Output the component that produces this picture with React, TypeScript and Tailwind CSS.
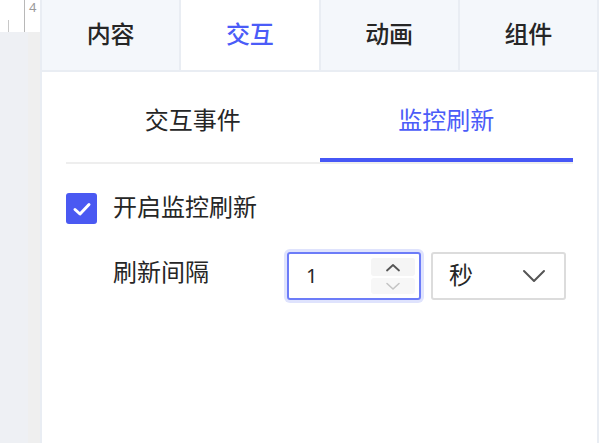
import React from "react";

const font = { fontFamily: '"Noto Sans", "Noto Sans CJK SC", sans-serif' };

export default function App() {
  return (
    <div className="flex h-[443px] w-[599px] overflow-hidden bg-white" style={font}>
      {/* left ruler strip */}
      <div className="flex w-[40px] flex-col">
        <div className="relative h-[32px] bg-white">
          <div className="absolute left-[8px] top-[20px] h-[12px] w-[1px] bg-[#c8c8c8]" />
          <div className="absolute left-[24px] top-0 h-[32px] w-[1px] bg-[#b8b8b8]" />
          <div className="absolute left-[29px] top-0 text-[13px] leading-[14px] text-[#9a9a9a]">4</div>
        </div>
        <div className="flex flex-1">
          <div className="w-[28px] bg-[#eef0f4]" />
          <div className="flex-1 bg-[#efefef]" />
        </div>
      </div>

      {/* panel */}
      <div className="flex flex-1 flex-col border-l-2 border-r-2 border-[#e9edf3]">
        {/* top tabs */}
        <div className="flex h-[72px] border-b-2 border-[#e9edf3]">
          <div className="flex flex-1 items-center justify-center border-r-2 border-[#e9edf3] bg-[#f4f7fb] pb-[3px] text-[24px] font-medium text-[#262626]">内容</div>
          <div className="flex flex-1 items-center justify-center border-r-2 border-[#e9edf3] bg-white pb-[3px] text-[24px] font-medium text-[#4b5cf8]">交互</div>
          <div className="flex flex-1 items-center justify-center border-r-2 border-[#e9edf3] bg-[#f4f7fb] pb-[3px] text-[24px] font-medium text-[#262626]">动画</div>
          <div className="flex flex-1 items-center justify-center bg-[#f4f7fb] pb-[3px] text-[24px] font-medium text-[#262626]">组件</div>
        </div>

        <div className="flex flex-1 flex-col px-[24px]">
          {/* sub tabs */}
          <div className="flex border-b-2 border-[#eeeeee]">
            <div className="flex flex-1 flex-col">
              <div className="flex h-[86px] items-center justify-center pt-[10px] text-[24px] text-[#262626]">交互事件</div>
              <div className="h-[4px]" />
            </div>
            <div className="flex flex-1 flex-col">
              <div className="flex h-[86px] items-center justify-center pt-[10px] text-[24px] text-[#4b5cf8]">监控刷新</div>
              <div className="h-[4px] bg-[#4657f6]" />
            </div>
          </div>

          {/* checkbox row */}
          <div className="mt-[29px] flex h-[31px] items-center">
            <div className="flex h-[31px] w-[31px] items-center justify-center rounded-[3px] bg-[#4a59f2]">
              <svg width="20" height="16" viewBox="0 0 20 16" fill="none">
                <path d="M3 8.5 L8 13 L17 3.5" stroke="white" strokeWidth="3" strokeLinecap="round" strokeLinejoin="round" />
              </svg>
            </div>
            <span className="ml-[16px] pb-[4px] text-[24px] leading-[28px] text-[#262626]">开启监控刷新</span>
          </div>

          {/* interval row */}
          <div className="mt-[28px] flex items-center">
            <span className="ml-[47px] w-[174px] pb-[8px] text-[24px] leading-[28px] text-[#262626]">刷新间隔</span>
            <div className="flex h-[48px] w-[134px] items-center rounded-[3px] border-2 border-[#6c7cf8] pl-[17px] pr-[4px] shadow-[0_0_0_3px_#dfe3fd]">
              <span className="flex-1 text-[20px] text-[#262626]">1</span>
              <div className="flex w-[44px] flex-col gap-[2px]">
                <div className="flex h-[18px] items-center justify-center rounded-[3px] bg-[#f5f5f5]">
                  <svg width="16" height="9" viewBox="0 0 16 9" fill="none">
                    <path d="M2 7.5 L8 2 L14 7.5" stroke="#555" strokeWidth="1.8" strokeLinecap="round" strokeLinejoin="round" />
                  </svg>
                </div>
                <div className="flex h-[16px] items-center justify-center rounded-[3px] bg-[#f7f7f7]">
                  <svg width="16" height="9" viewBox="0 0 16 9" fill="none">
                    <path d="M2 1.5 L8 7 L14 1.5" stroke="#c4c4c4" strokeWidth="1.6" strokeLinecap="round" strokeLinejoin="round" />
                  </svg>
                </div>
              </div>
            </div>
            <div className="ml-[10px] flex h-[48px] w-[135px] items-center rounded-[3px] border-2 border-[#dcdcdc] pl-[16px] pr-[18px]">
              <span className="flex-1 pb-[2px] text-[24px] leading-[28px] text-[#262626]">秒</span>
              <svg width="24" height="14" viewBox="0 0 24 14" fill="none">
                <path d="M2 2 L12 12 L22 2" stroke="#555" strokeWidth="2" strokeLinecap="round" strokeLinejoin="round" />
              </svg>
            </div>
          </div>
        </div>
      </div>
    </div>
  );
}
